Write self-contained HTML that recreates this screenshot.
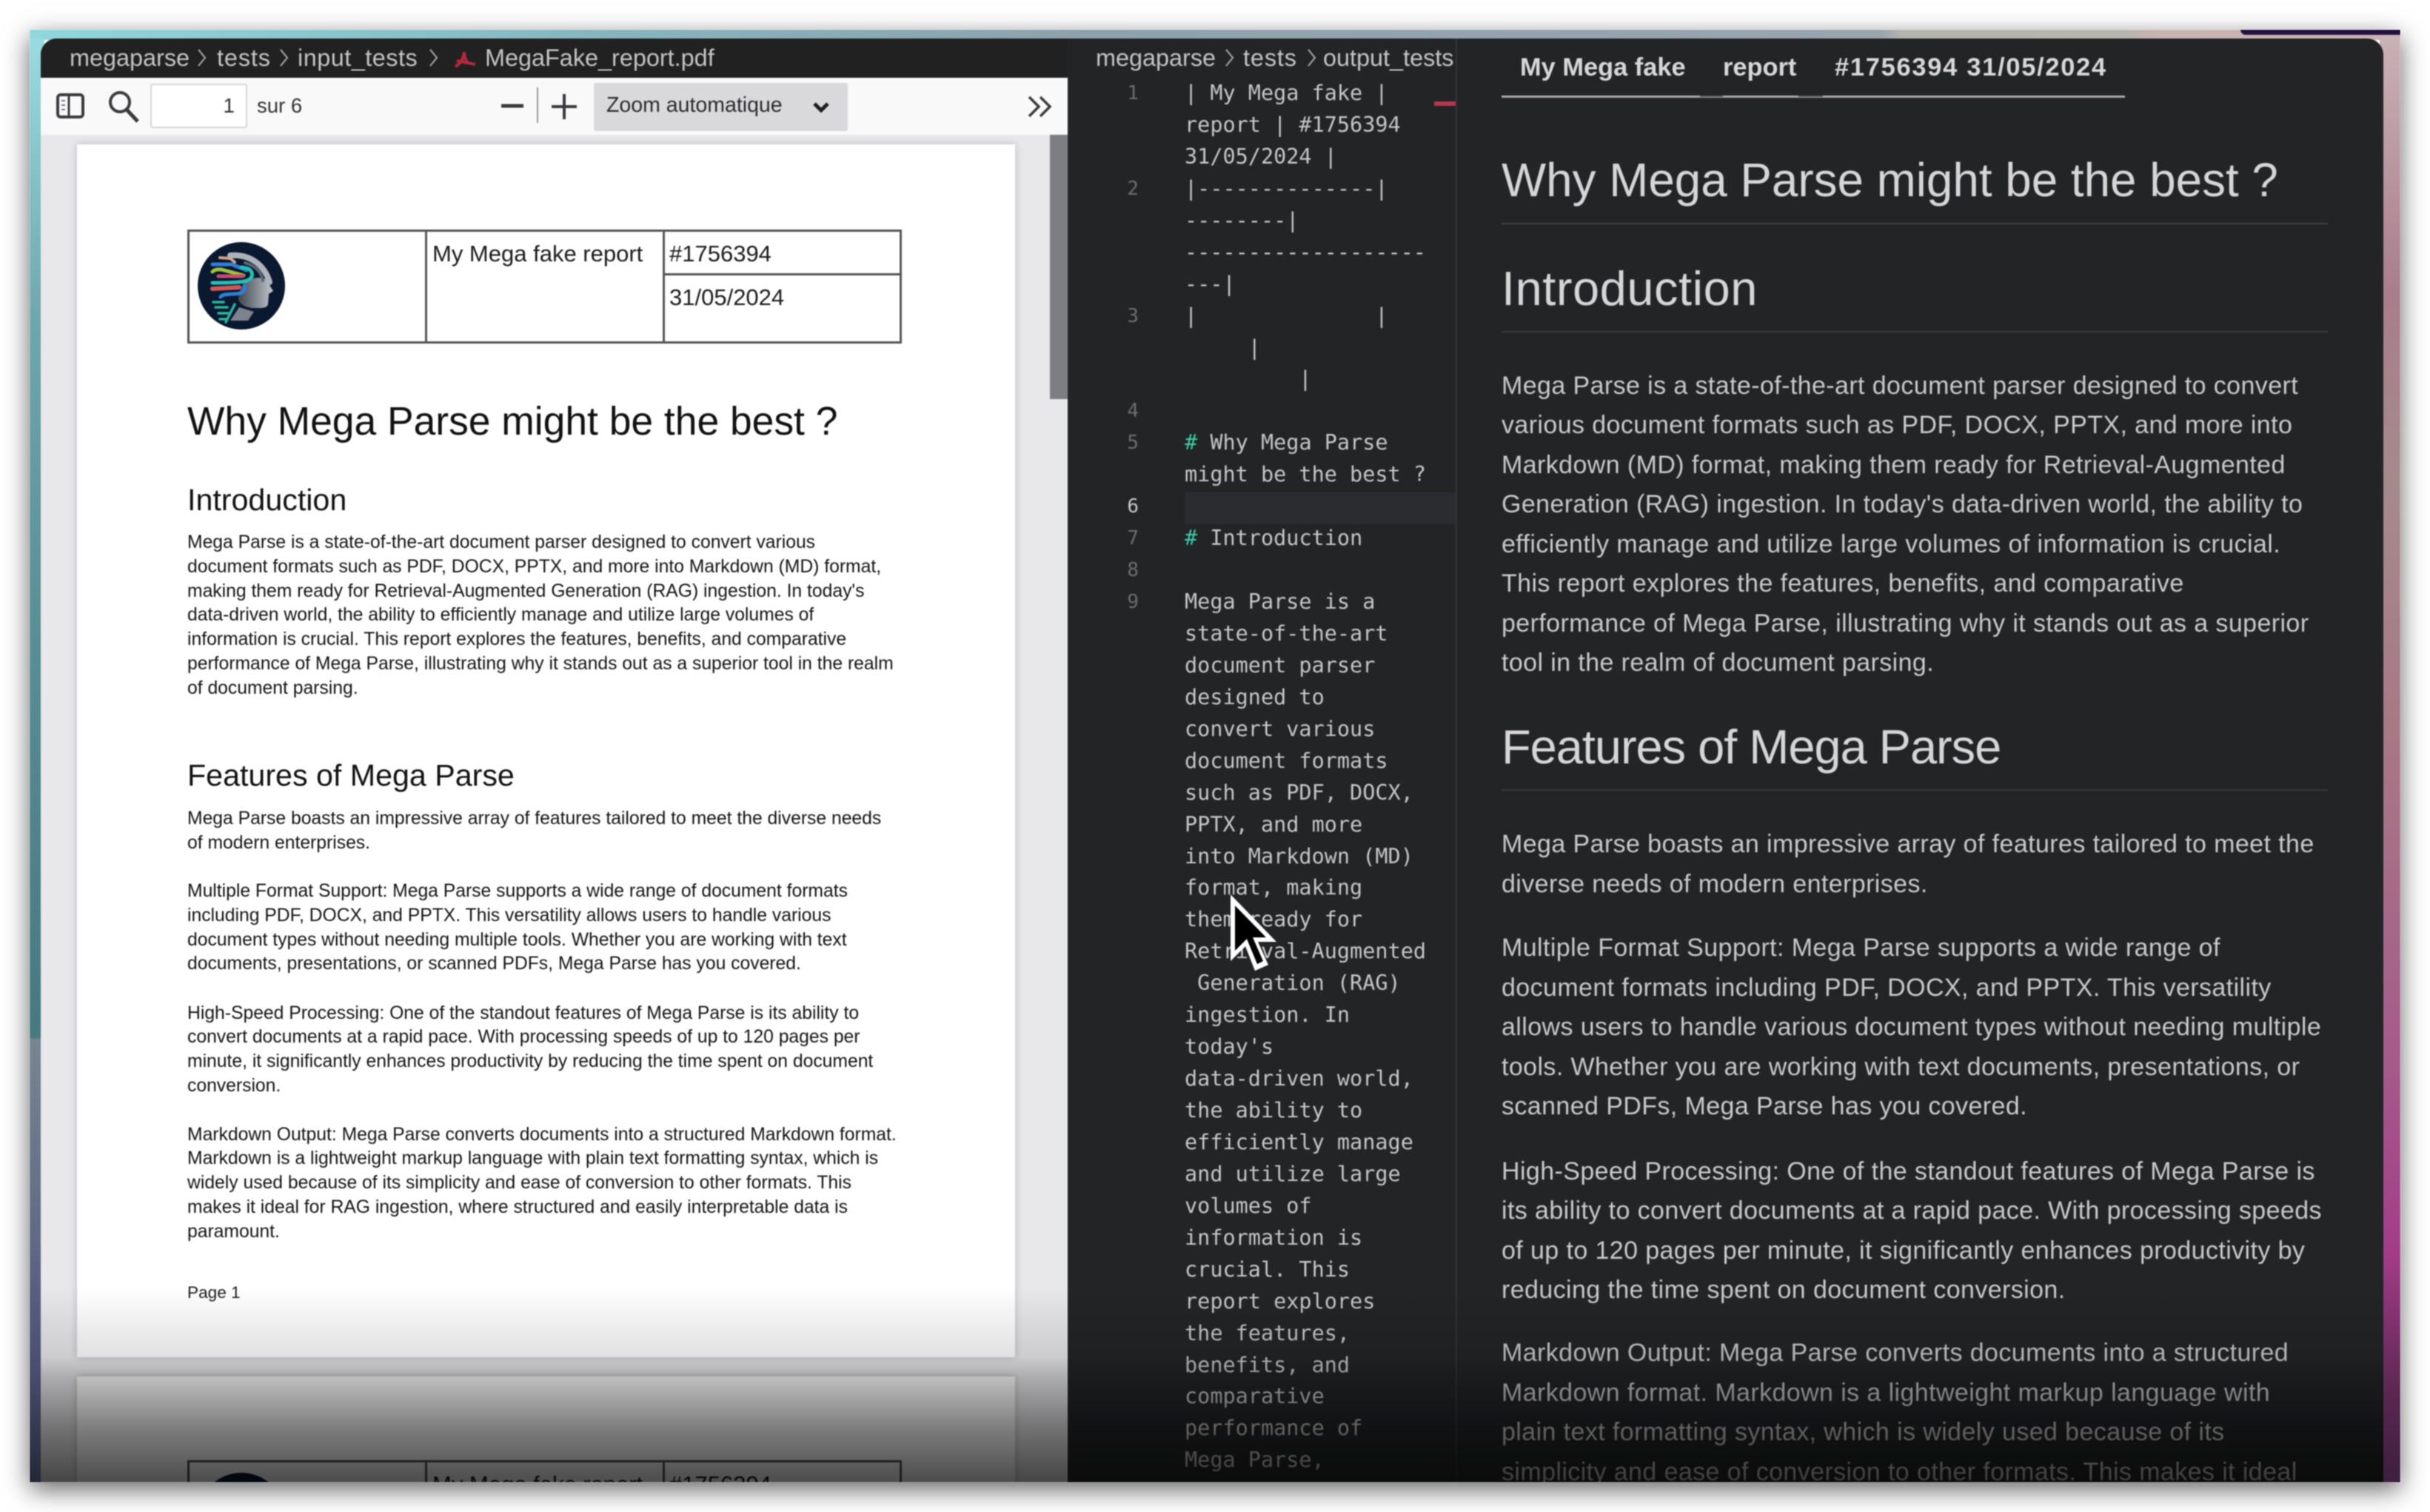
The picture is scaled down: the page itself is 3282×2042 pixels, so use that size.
<!DOCTYPE html>
<html lang="en"><head><meta charset="utf-8"><title>MegaParse</title>
<style>
html,body{margin:0;padding:0;background:#fff;width:3282px;height:2042px;overflow:hidden}
*{box-sizing:border-box}
#frame{position:absolute;left:40px;top:40px;width:3202px;height:1962px;box-shadow:0 10px 32px rgba(0,0,0,.6)}
#clip{position:absolute;left:0;top:0;width:3202px;height:1962px;overflow:hidden}
#root{position:absolute;left:-40px;top:-40px;width:3282px;height:2002px;overflow:hidden;filter:blur(.8px)}
.a{position:absolute;white-space:pre;margin:0}
.s{font-family:"Liberation Sans",sans-serif}
.m{font-family:"DejaVu Sans Mono","Liberation Mono",monospace}
.pdf{font-family:"Liberation Sans",sans-serif;color:#141414;left:253px;font-size:24.7px;line-height:32.8px}
.md{font-family:"Liberation Sans",sans-serif;color:#c9c9c9;left:2028px;font-size:34px;line-height:53.5px;letter-spacing:.4px}
.crumb{font-family:"Liberation Sans",sans-serif;color:#c4c4c4;font-size:32.4px;line-height:40px;top:58px}
.ln{font-family:"DejaVu Sans Mono",monospace;color:#6b6d6e;font-size:26px;line-height:42.93px;left:1500px;width:38px;text-align:right}
.r{position:absolute}
.hd{font-size:34.4px;line-height:40px;font-weight:700;color:#d8d8d8;top:71px}
.t{font-size:31px;line-height:40px;color:#1a1a1a}
</style></head><body>
<div id="frame"><div id="clip"><div id="root">

<!-- wallpaper strips -->
<div class="r" style="left:40px;top:40px;width:3202px;height:14px;background:linear-gradient(90deg,#90d6dc 0,#86b4bd 800px,#8da2ab 1400px,#97a3ad 2200px,#9aa5ae 2500px,#b4b5ae 2530px,#b6b5ae 2830px,#c8b3b5 2870px,#c9b2b5 3202px)"></div>
<div class="r" style="left:3026px;top:40px;width:216px;height:7px;background:#22123f;border-bottom-left-radius:8px"></div>
<div class="r" style="left:40px;top:52px;width:20px;height:1950px;background:linear-gradient(180deg,#98dbe0 0,#6fa6ac 380px,#5b9096 760px,#477a7f 1340px,#4a7a7e 1349px,#76868f 1352px,#5e6885 1640px,#4a4d6e 1800px,#242636 1950px)"></div>
<div class="r" style="left:3214px;top:52px;width:28px;height:1950px;background:linear-gradient(180deg,#c9b1b5 0,#a97d8c 340px,#a58a8c 600px,#a77585 990px,#a45b8a 1380px,#a33c88 1640px,#57264f 1840px,#3c1f3f 1950px)"></div>

<!-- window -->
<div class="r" style="left:55px;top:52px;width:3164px;height:1950px;border-radius:22px 22px 0 0;overflow:hidden;background:#232426">

  <div style="position:absolute;left:-55px;top:-52px;width:3282px;height:2002px">

    <!-- pdf title bar -->
    <div class="r" style="left:55px;top:52px;width:1387px;height:53px;background:#212121"></div>
    <!-- toolbar -->
    <div class="r" style="left:55px;top:105px;width:1387px;height:77px;background:#f9f9fa;box-shadow:0 2px 3px rgba(0,0,0,.12)"></div>
    <!-- viewer -->
    <div class="r" style="left:55px;top:182px;width:1387px;height:1820px;background:#e8e8ea;overflow:hidden">
      <div style="position:absolute;left:-55px;top:-182px;width:1442px;height:2002px">
        <div class="r" style="left:104px;top:195px;width:1267px;height:1638px;background:#fff;box-shadow:0 0 10px rgba(0,0,0,.2)"></div>
        <div class="r" style="left:104px;top:1859px;width:1267px;height:143px;background:#fff;box-shadow:0 0 10px rgba(0,0,0,.2)"></div>
        <div class="r" style="left:1418px;top:182px;width:24px;height:357px;background:#7e7e82"></div>

        <!-- table page 1 -->
        <div class="r" style="left:253px;top:310px;width:965px;height:154px;border:3px solid #555"></div>
        <div class="r" style="left:574px;top:310px;width:3px;height:154px;background:#555"></div>
        <div class="r" style="left:895px;top:310px;width:3px;height:154px;background:#555"></div>
        <div class="r" style="left:895px;top:369px;width:323px;height:3px;background:#555"></div>
        <div class="a s t" style="left:584px;top:322.5px">My Mega fake report</div>
        <div class="a s t" style="left:904px;top:322.5px">#1756394</div>
        <div class="a s t" style="left:904px;top:382px">31/05/2024</div>
        <svg class="r" style="left:265px;top:325px" width="122" height="122" viewBox="0 0 122 122">
          <defs><linearGradient id="f" x1="0" x2="1" y1="0" y2="0"><stop offset="0" stop-color="#3f4753"/><stop offset="1" stop-color="#c3c7cd"/></linearGradient></defs>
          <circle cx="61" cy="61" r="59" fill="#0a1830"/>
          <path d="M66 56c6-5 18-8 28-4l10 16-6 4-1 14c-2 6-10 5-18 5-10 0-20-4-22-12 0-8 4-18 9-23z" fill="url(#f)"/>
          <path d="M58 90l20 6-8 12-24 0z" fill="#7d838c"/>
          <g fill="none" stroke-linecap="round">
            <path d="M46 20c26-2 46 12 53 36" stroke="#aeb3ba" stroke-width="8"/>
            <path d="M66 30c14 4 22 12 24 24" stroke="#5d6672" stroke-width="4"/>
            <path d="M32 23l14 1 6 5" stroke="#d0a58a" stroke-width="4"/>
            <path d="M22 32h26l20 8" stroke="#2f7fd6" stroke-width="5"/>
            <path d="M22 42c4-4 8-3 12-3l30 8" stroke="#9fc33c" stroke-width="5"/>
            <path d="M30 48h33" stroke="#c94a70" stroke-width="5"/>
            <path d="M22 57c14 0 30 0 43-2 8-2 12-6 10-12-2-5-6-6-14-7" stroke="#27c0b4" stroke-width="5"/>
            <path d="M22 65l36-2" stroke="#d05a58" stroke-width="6"/>
            <path d="M33 76c2-5 18-3 26-5 5-2 7-5 6-10" stroke="#2f7fd6" stroke-width="5"/>
            <path d="M23 83h14M26 90h16M30 98h14M32 106h10M52 86l-12 24" stroke="#2bb49f" stroke-width="3.5"/>
          </g>
        </svg>

        <!-- pdf body -->
        <div class="a s" style="left:253px;top:540px;font-size:53.4px;line-height:60px;color:#111">Why Mega Parse might be the best ?</div>
        <div class="a s" style="left:253px;top:651px;font-size:41.2px;line-height:48px;color:#111">Introduction</div>
        <div class="a pdf" style="top:717px">Mega Parse is a state-of-the-art document parser designed to convert various
document formats such as PDF, DOCX, PPTX, and more into Markdown (MD) format,
making them ready for Retrieval-Augmented Generation (RAG) ingestion. In today's
data-driven world, the ability to efficiently manage and utilize large volumes of
information is crucial. This report explores the features, benefits, and comparative
performance of Mega Parse, illustrating why it stands out as a superior tool in the realm
of document parsing.</div>
        <div class="a s" style="left:253px;top:1023px;font-size:41.2px;line-height:48px;color:#111">Features of Mega Parse</div>
        <div class="a pdf" style="top:1090px">Mega Parse boasts an impressive array of features tailored to meet the diverse needs
of modern enterprises.</div>
        <div class="a pdf" style="top:1188px">Multiple Format Support: Mega Parse supports a wide range of document formats
including PDF, DOCX, and PPTX. This versatility allows users to handle various
document types without needing multiple tools. Whether you are working with text
documents, presentations, or scanned PDFs, Mega Parse has you covered.</div>
        <div class="a pdf" style="top:1352.6px">High-Speed Processing: One of the standout features of Mega Parse is its ability to
convert documents at a rapid pace. With processing speeds of up to 120 pages per
minute, it significantly enhances productivity by reducing the time spent on document
conversion.</div>
        <div class="a pdf" style="top:1516.6px">Markdown Output: Mega Parse converts documents into a structured Markdown format.
Markdown is a lightweight markup language with plain text formatting syntax, which is
widely used because of its simplicity and ease of conversion to other formats. This
makes it ideal for RAG ingestion, where structured and easily interpretable data is
paramount.</div>
        <div class="a s" style="left:253px;top:1731px;font-size:22.6px;line-height:30px;color:#1a1a1a">Page 1</div>

        <!-- table page 2 (clipped at window bottom) -->
        <div class="r" style="left:253px;top:1972px;width:965px;height:30px;border:3px solid #555;border-bottom:0"></div>
        <div class="r" style="left:574px;top:1972px;width:3px;height:30px;background:#555"></div>
        <div class="r" style="left:895px;top:1972px;width:3px;height:30px;background:#555"></div>
        <div class="r" style="left:584px;top:1972px;width:300px;height:30px;overflow:hidden"><div class="a s t" style="left:0;top:12.5px">My Mega fake report</div></div>
        <div class="r" style="left:904px;top:1972px;width:300px;height:30px;overflow:hidden"><div class="a s t" style="left:0;top:12.5px">#1756394</div></div>
        <svg class="r" style="left:265px;top:1987px" width="122" height="15"><circle cx="61" cy="61" r="59" fill="#0a1830"/></svg>
      </div>
    </div>

    <!-- breadcrumbs left -->
    <div class="a crumb" style="left:94px">megaparse</div>
    <div class="a crumb" style="left:293px;letter-spacing:.9px">tests</div>
    <div class="a crumb" style="left:402px;letter-spacing:.5px">input_tests</div>
    <div class="a crumb" style="left:655px">MegaFake_report.pdf</div>
    <svg class="r" style="left:0;top:52px" width="1442" height="53" fill="none" stroke="#a9a9a9" stroke-width="2">
      <path d="M268 15l9 11-9 11M379 15l9 11-9 11M581 15l9 11-9 11"/>
      <path d="M627 18c0 8 2 12 5 15l10 2M627 18c-1 8-4 15-12 20M617 30l15 3" stroke="#b3283c" stroke-width="4"/>
    </svg>

    <!-- toolbar controls -->
    <svg class="r" style="left:0;top:105px" width="1442" height="77" fill="none" stroke="#3b3b3e">
      <rect x="78" y="23" width="34" height="30" rx="4" stroke-width="4"/>
      <path d="M93 23v30" stroke-width="3"/>
      <path d="M83 31h5M83 37h5M83 43h5" stroke-width="2" stroke="#777"/>
      <circle cx="162" cy="33" r="13" stroke-width="4"/>
      <path d="M171 43l15 16" stroke-width="5"/>
      <path d="M677 38h30" stroke-width="5"/>
      <path d="M726 13v48" stroke="#999" stroke-width="2"/>
      <path d="M745 39h34M762 22v34" stroke-width="4"/>
      <path d="M1390 26l13 13-13 13M1405 26l13 13-13 13" stroke-width="3.5"/>
    </svg>
    <div class="r" style="left:203px;top:113px;width:131px;height:60px;background:#fff;border:2px solid #d6d6d8;border-radius:3px"></div>
    <div class="a s" style="left:203px;top:123px;width:114px;text-align:right;font-size:28px;line-height:40px;color:#333">1</div>
    <div class="a s" style="left:347px;top:123px;font-size:27.5px;line-height:40px;color:#333">sur 6</div>
    <div class="r" style="left:802px;top:112px;width:343px;height:65px;background:#d9d9dc;border-radius:3px"></div>
    <div class="a s" style="left:819px;top:122px;font-size:28.5px;line-height:40px;color:#2b2b2e">Zoom automatique</div>
    <svg class="r" style="left:1096px;top:136px" width="26" height="18" fill="none" stroke="#1e1e20" stroke-width="5"><path d="M4 4l9 9 9-9"/></svg>

    <!-- code panel -->
    <div class="r" style="left:1442px;top:52px;width:526px;height:1950px;background:#232426"></div>
    <div class="r" style="left:1600px;top:665px;width:368px;height:43px;background:#2b2c2f"></div>
    <div class="a crumb" style="left:1480px">megaparse</div>
    <div class="a crumb" style="left:1679px;letter-spacing:.9px">tests</div>
    <div class="r" style="left:1787px;top:52px;width:181px;height:53px;overflow:hidden"><div class="a crumb" style="left:0;top:6px">output_tests</div></div>
    <svg class="r" style="left:1640px;top:52px" width="160" height="53" fill="none" stroke="#a9a9a9" stroke-width="2"><path d="M16 15l9 11-9 11M127 15l9 11-9 11"/></svg>

    <div class="a ln" style="top:105px">1</div>
    <div class="a ln" style="top:234px">2</div>
    <div class="a ln" style="top:405.5px">3</div>
    <div class="a ln" style="top:534px">4</div>
    <div class="a ln" style="top:577px">5</div>
    <div class="a ln" style="top:663px;color:#c8c8c8">6</div>
    <div class="a ln" style="top:706px">7</div>
    <div class="a ln" style="top:749px">8</div>
    <div class="a ln" style="top:792px">9</div>

    <div class="a m" style="left:1600px;top:105px;font-size:28.5px;line-height:42.93px;color:#c6c6c6">| My Mega fake |
report | #1756394
31/05/2024 |
|--------------|
--------|
-------------------
---|
|              |
     |
         |

<span style="color:#3ecba8">#</span> Why Mega Parse
might be the best ?

<span style="color:#3ecba8">#</span> Introduction

Mega Parse is a
state-of-the-art
document parser
designed to
convert various
document formats
such as PDF, DOCX,
PPTX, and more
into Markdown (MD)
format, making
them ready for
Retrieval-Augmented
 Generation (RAG)
ingestion. In
today's
data-driven world,
the ability to
efficiently manage
and utilize large
volumes of
information is
crucial. This
report explores
the features,
benefits, and
comparative
performance of
Mega Parse,</div>
    <div class="r" style="left:1937px;top:137px;width:31px;height:6px;background:#b9344f"></div>
    <div class="r" style="left:1966px;top:52px;width:2px;height:1950px;background:#333436"></div>

    <!-- preview -->
    <div class="a s hd" style="left:2053px">My Mega fake</div>
    <div class="a s hd" style="left:2327px">report</div>
    <div class="a s hd" style="left:2478px;letter-spacing:1.75px">#1756394 31/05/2024</div>
    <div class="r" style="left:2028px;top:129px;width:842px;height:3px;background:#a8a8a8"></div>
    <div class="r" style="left:2296px;top:129px;width:31px;height:2px;background:#555"></div>
    <div class="r" style="left:2429px;top:129px;width:33px;height:2px;background:#555"></div>

    <div class="a s" style="left:2028px;top:203px;font-size:63.75px;line-height:80px;color:#d6d6d6">Why Mega Parse might be the best ?</div>
    <div class="r" style="left:2028px;top:301px;width:1116px;height:2px;background:#3e3f41"></div>
    <div class="a s" style="left:2028px;top:350px;font-size:65px;line-height:80px;letter-spacing:.52px;color:#d6d6d6">Introduction</div>
    <div class="r" style="left:2028px;top:447px;width:1116px;height:2px;background:#3a3b3d"></div>
    <div class="a md" style="top:494.5px">Mega Parse is a state-of-the-art document parser designed to convert
various document formats such as PDF, DOCX, PPTX, and more into
Markdown (MD) format, making them ready for Retrieval-Augmented
Generation (RAG) ingestion. In today's data-driven world, the ability to
efficiently manage and utilize large volumes of information is crucial.
This report explores the features, benefits, and comparative
performance of Mega Parse, illustrating why it stands out as a superior
tool in the realm of document parsing.</div>
    <div class="a s" style="left:2028px;top:969px;font-size:65px;line-height:80px;letter-spacing:-1.05px;color:#d6d6d6">Features of Mega Parse</div>
    <div class="r" style="left:2028px;top:1066px;width:1116px;height:2px;background:#3a3b3d"></div>
    <div class="a md" style="top:1114px">Mega Parse boasts an impressive array of features tailored to meet the
diverse needs of modern enterprises.</div>
    <div class="a md" style="top:1254px">Multiple Format Support: Mega Parse supports a wide range of
document formats including PDF, DOCX, and PPTX. This versatility
allows users to handle various document types without needing multiple
tools. Whether you are working with text documents, presentations, or
scanned PDFs, Mega Parse has you covered.</div>
    <div class="a md" style="top:1555.5px">High-Speed Processing: One of the standout features of Mega Parse is
its ability to convert documents at a rapid pace. With processing speeds
of up to 120 pages per minute, it significantly enhances productivity by
reducing the time spent on document conversion.</div>
    <div class="a md" style="top:1801.4px;height:200.6px;overflow:hidden">Markdown Output: Mega Parse converts documents into a structured
Markdown format. Markdown is a lightweight markup language with
plain text formatting syntax, which is widely used because of its
simplicity and ease of conversion to other formats. This makes it ideal</div>

    <!-- cursor -->
    <svg class="r" style="left:1650px;top:1200px" width="84" height="120" viewBox="1650 1200 84 120">
      <polygon points="1662,1208 1662,1298 1682,1278 1695,1311 1713,1303 1699,1272 1724,1272" fill="#fff"/>
      <polygon points="1668,1223 1668,1284 1684,1268 1698,1302 1706,1298 1692,1266 1710,1266" fill="#000"/>
    </svg>

    <!-- bottom fade -->
    <div class="r" style="left:55px;top:1737px;width:3164px;height:265px;background:linear-gradient(180deg,rgba(0,0,0,0) 0,rgba(0,0,0,.12) 96px,rgba(0,0,0,.25) 122px,rgba(0,0,0,.52) 196px,rgba(0,0,0,.7) 265px)"></div>
  </div>
</div>
</div></div></div>
</body></html>
